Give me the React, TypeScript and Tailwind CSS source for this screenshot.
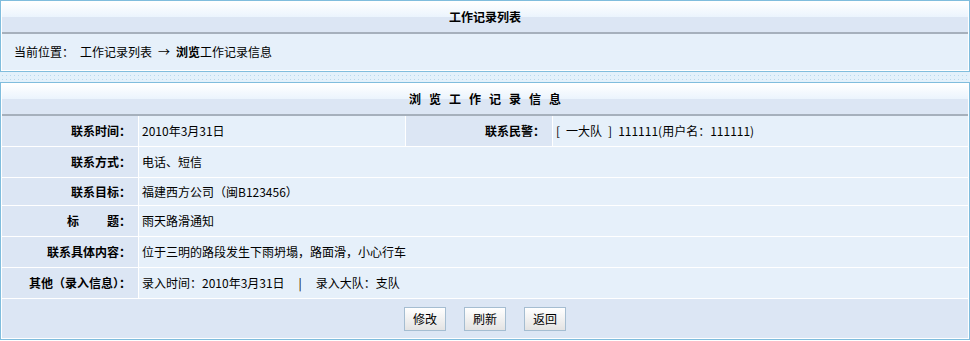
export default function App() {
  const label =
    "flex items-center justify-end pr-[7px] bg-[#dce6f4] font-bold whitespace-nowrap";
  const value = "flex items-center pl-[3px] bg-[#e6f0fa] whitespace-nowrap";
  const btn =
    "w-[42px] h-[24px] border border-[#a5bdd1] bg-[linear-gradient(to_bottom,#ffffff,#e3e3e3)] flex items-center justify-center text-[12px] leading-none text-black";
  return (
    <div className="w-[970px] h-[341px] bg-white text-[12px] leading-[14px] text-black font-['Noto_Sans_CJK_SC',sans-serif]">
      {/* Panel 1 */}
      <div className="border border-[#80bddd] p-px bg-white">
        <div className="h-[32px] border-b-2 border-[#a6b0bc] bg-[linear-gradient(to_bottom,#ffffff_0%,#ebf4fd_50%,#dce6f4_50%,#dce6f4_100%)] flex items-center justify-center font-bold">
          工作记录列表
        </div>
        <div className="h-[36px] bg-[#e6f0fa] flex items-center pl-[12px] whitespace-nowrap">
          <span>当前位置：</span>
          <span className="ml-[6px]">工作记录列表</span>
          <span className="inline-block w-[24px] text-center">→</span>
          <span className="font-bold">浏览</span>
          <span>工作记录信息</span>
        </div>
      </div>

      {/* Dotted strip */}
      <div className="h-[10px] bg-[#e3f1fb] flex flex-col pt-[3px] gap-[3px]">
        <div className="h-px bg-[repeating-linear-gradient(to_right,transparent_0px,transparent_2px,#bad8ec_2px,#bad8ec_3px,transparent_3px,transparent_4px)]" />
        <div className="h-px bg-[repeating-linear-gradient(to_right,transparent_0px,transparent_2px,#bad8ec_2px,#bad8ec_3px,transparent_3px,transparent_4px)]" />
      </div>

      {/* Panel 2 */}
      <div className="border border-[#80bddd] p-px bg-white">
        <div className="h-[32px] border-b-2 border-[#a6b0bc] bg-[linear-gradient(to_bottom,#ffffff_0%,#ebf4fd_50%,#dce6f4_50%,#dce6f4_100%)] flex items-center justify-center font-bold tracking-[8px] pl-[8px]">
          浏览工作记录信息
        </div>
        <div className="grid grid-cols-[136px_266px_146px_1fr] grid-rows-[30px_30px_27px_30px_30px_30px_39px] gap-px bg-white">
          <div className={label}>联系时间：</div>
          <div className={value}>2010年3月31日</div>
          <div className={label}>联系民警：</div>
          <div className={value}>
            <span>[</span>
            <span className="ml-[6px]">一大队</span>
            <span className="ml-[6px]">]</span>
            <span className="ml-[6px]">111111(用户名：111111)</span>
          </div>

          <div className={label}>联系方式：</div>
          <div className={`${value} col-span-3`}>电话、短信</div>

          <div className={label}>联系目标：</div>
          <div className={`${value} col-span-3`}>福建西方公司（闽B123456）</div>

          <div className={label}>
            <span>标</span>
            <span className="inline-block w-[28px]" />
            <span>题：</span>
          </div>
          <div className={`${value} col-span-3`}>雨天路滑通知</div>

          <div className={label}>联系具体内容：</div>
          <div className={`${value} col-span-3`}>
            位于三明的路段发生下雨坍塌，路面滑，小心行车
          </div>

          <div className={label}>其他（录入信息）：</div>
          <div className={`${value} col-span-3`}>
            <span>录入时间：2010年3月31日</span>
            <span className="inline-block w-[31px] text-center">|</span>
            <span>录入大队：支队</span>
          </div>

          <div className="col-span-4 bg-[#dce6f4] flex items-center justify-center gap-[18px]">
            <button className={btn}>修改</button>
            <button className={btn}>刷新</button>
            <button className={btn}>返回</button>
          </div>
        </div>
      </div>
    </div>
  );
}
